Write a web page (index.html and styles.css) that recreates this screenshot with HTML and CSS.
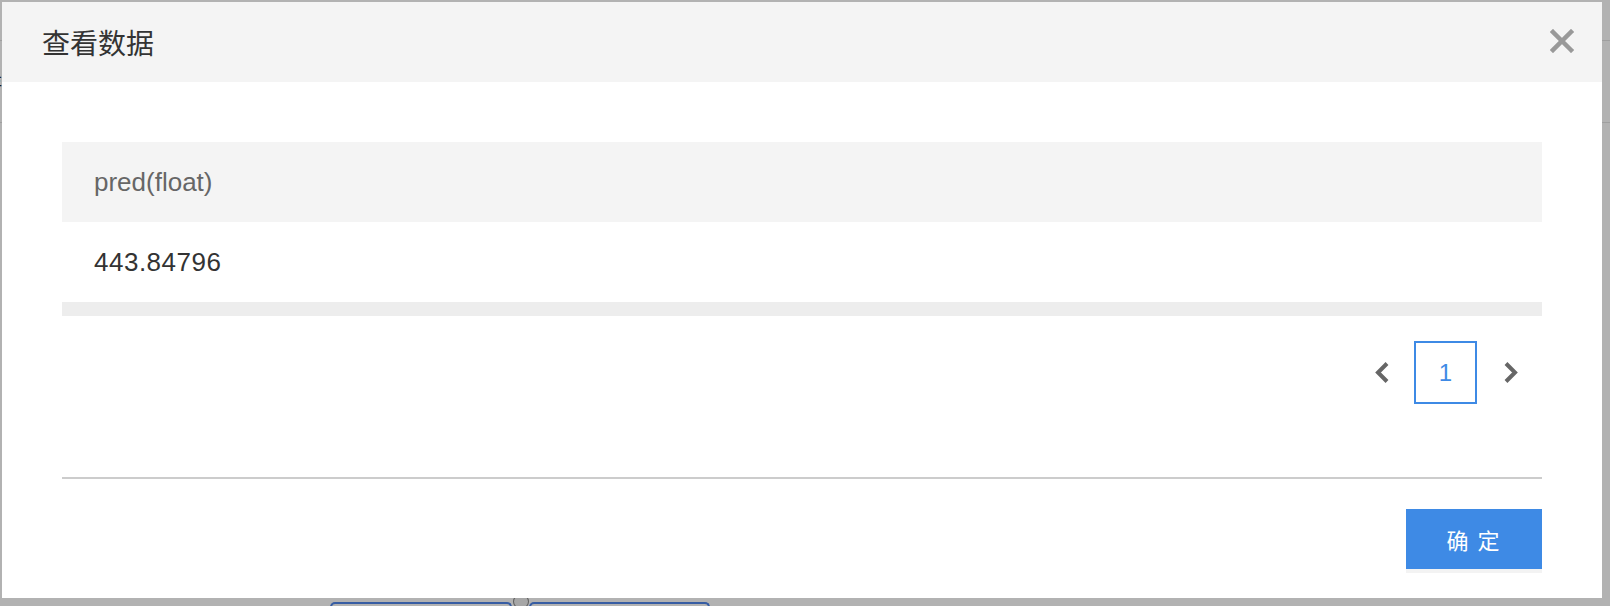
FILE: index.html
```html
<!DOCTYPE html>
<html lang="zh-CN">
<head>
    <meta charset="UTF-8">
    <meta name="viewport" content="width=device-width, initial-scale=1.0">
    <title>查看数据</title>
    <link rel="stylesheet" href="styles.css">
</head>
<body>
    <div class="page">
      <div class="topbar"></div>
      <div class="toolbar"><span class="toolbar-label">保存</span></div>
      <div class="canvas">
        <div class="node node-a"></div>
        <div class="port"></div>
        <div class="node node-b"></div>
      </div>
    </div>

    <div class="mask"></div>

    <div class="modal">
      <div class="modal-header">
        <h2 class="modal-title">查看数据</h2>
        <button class="modal-close" aria-label="关闭">
          <svg width="24" height="24" viewBox="0 0 24 24">
            <path d="M3 3 L21 21 M21 3 L3 21" stroke="#999" stroke-width="4.5" stroke-linecap="square" fill="none"/>
          </svg>
        </button>
      </div>

      <div class="modal-body">
        <table class="data-table">
          <thead>
            <tr>
              <th>pred(float)</th>
            </tr>
          </thead>
          <tbody>
            <tr>
              <td>443.84796</td>
            </tr>
          </tbody>
        </table>
        <div class="scroll-bar"></div>

        <div class="pager">
          <button class="pager-arrow" aria-label="上一页">
            <svg width="14" height="21" viewBox="0 0 14 21">
              <path d="M12 1.5 L3 10.5 L12 19.5" stroke="#666" stroke-width="4" fill="none"/>
            </svg>
          </button>
          <span class="pager-item active">1</span>
          <button class="pager-arrow next" aria-label="下一页">
            <svg width="14" height="21" viewBox="0 0 14 21">
              <path d="M2 1.5 L11 10.5 L2 19.5" stroke="#666" stroke-width="4" fill="none"/>
            </svg>
          </button>
        </div>
      </div>

      <div class="modal-footer">
        <button class="btn-primary">确 定</button>
      </div>
    </div>
</body>
</html>
```

FILE: styles.css
```css
html, body {
  margin: 0;
  padding: 0;
}
body {
  width: 1610px;
  height: 606px;
  overflow: hidden;
  background-color: #fff;
  font-family: "Liberation Sans", "Noto Sans CJK SC", sans-serif;
  position: relative;
}

/* page behind the dialog */
.page {
  height: 606px;
  overflow: hidden;
}
.topbar {
  height: 40px;
  border-bottom: 1px solid #e4e4e4;
}
.toolbar {
  height: 81px;
  border-bottom: 1px solid #e4e4e4;
  display: flex;
  align-items: center;
}
.toolbar-label {
  margin-left: -34px;
  font-size: 18px;
  color: #222;
}
.canvas {
  position: relative;
  height: 484px;
}
.node {
  position: absolute;
  top: 479px;
  height: 5px;
  border: 2px solid #4f86ea;
  border-bottom: 0;
  border-radius: 6px 6px 0 0;
  background: #fff;
  box-sizing: border-box;
}
.node-a {
  left: 330px;
  width: 182px;
}
.node-b {
  left: 529px;
  width: 181px;
}
.port {
  position: absolute;
  top: 471px;
  left: 513px;
  width: 14px;
  height: 13px;
  border: 1px solid #888;
  border-radius: 50%;
  background: #eee;
}

.mask {
  position: absolute;
  inset: 0;
  background-color: rgba(0, 0, 0, 0.3);
}

/* dialog */
.modal {
  position: absolute;
  top: 2px;
  left: 2px;
  width: 1600px;
  height: 596px;
  background-color: #fff;
  display: flex;
  flex-direction: column;
}
.modal-header {
  height: 80px;
  flex-shrink: 0;
  background-color: #f4f4f4;
  display: flex;
  align-items: center;
  justify-content: space-between;
  padding: 0 28px 0 40px;
}
.modal-title {
  margin: 0;
  font-size: 28px;
  font-weight: normal;
  color: #333;
}
.modal-close {
  border: 0;
  padding: 0;
  background: none;
  width: 24px;
  height: 24px;
  margin-top: -2px;
  display: block;
}
.modal-close svg {
  display: block;
}

.modal-body {
  padding: 60px 60px 0;
}
.data-table {
  width: 100%;
  border-collapse: collapse;
}
.data-table th,
.data-table td {
  height: 80px;
  padding: 0 32px;
  text-align: left;
  font-size: 26px;
  font-weight: normal;
}
.data-table th {
  background-color: #f4f4f4;
  color: #666;
}
.data-table td {
  color: #333;
  letter-spacing: 0.5px;
}
.scroll-bar {
  height: 14px;
  background-color: #ededed;
}

.pager {
  margin-top: 25px;
  height: 63px;
  padding-right: 24px;
  display: flex;
  justify-content: flex-end;
  align-items: center;
}
.pager-arrow {
  border: 0;
  padding: 0;
  background: none;
  width: 14px;
  height: 21px;
}
.pager-arrow svg {
  display: block;
}
.pager-arrow.next {
  margin-left: 27px;
}
.pager-item {
  margin-left: 25px;
  width: 63px;
  height: 63px;
  box-sizing: border-box;
  border: 2px solid #3e8ae5;
  color: #3e8ae5;
  font-size: 24px;
  display: flex;
  align-items: center;
  justify-content: center;
}

.modal-footer {
  margin: 73px 60px 0;
  border-top: 2px solid #ccc;
  padding-top: 30px;
  display: flex;
  justify-content: flex-end;
}
.btn-primary {
  width: 136px;
  height: 60px;
  border: 0;
  background-color: #3e8ae5;
  color: #fff;
  font-family: "Noto Sans CJK SC", sans-serif;
  font-size: 22px;
  letter-spacing: 2px;
  box-shadow: 0 4px 0 #f3f3f3;
}
```
